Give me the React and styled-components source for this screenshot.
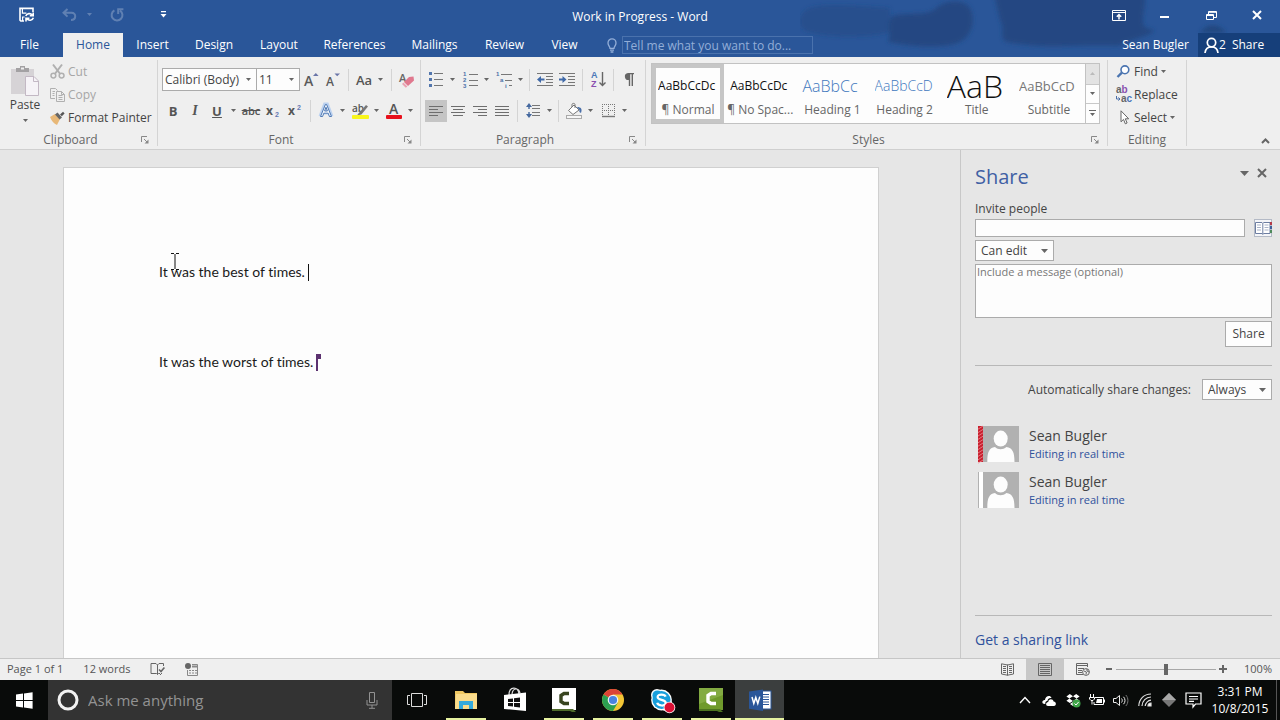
import React from "react";
import styled, { createGlobalStyle, css } from "styled-components";

const UI = `"Open Sans", "Noto Sans", sans-serif`;
const DOC = `Lato, "Open Sans", sans-serif`;
const TINY = `"Liberation Sans", sans-serif`;

const GlobalStyle = createGlobalStyle`
  *, *::before, *::after { box-sizing: border-box; }
  body { margin: 0; background: #e6e6e6; font-family: ${UI}; font-size: 12px; line-height: 16px; color: #444; }
  button, input, select, textarea { font: inherit; color: inherit; margin: 0; border-radius: 0; outline: none; }
  button { background: none; border: 0; padding: 0; cursor: default; }
  svg { display: block; flex: none; overflow: visible; }
  p, h1, h2 { margin: 0; font-weight: 400; }
`;

/* ---------- frame ---------- */
const Window = styled.div`
  display: flex;
  flex-direction: column;
  min-height: 100vh;
`;

const Header = styled.header`
  position: relative;
  background: #2a5699;
  color: #fff;
`;

const Pattern = styled.svg`
  position: absolute;
  top: 0;
  right: 0;
  overflow: hidden;
`;

const TitleBar = styled.div`
  position: relative;
  display: grid;
  grid-template-columns: 1fr auto 1fr;
  align-items: center;
  height: 33px;
`;

const QuickAccess = styled.div`
  display: flex;
  align-items: center;
  padding: 0 0 4px 19px;
  gap: 7px;
`;

const QuickButton = styled.button`
  display: flex;
  align-items: center;
  justify-content: center;
  gap: 10px;
  height: 20px;
  width: ${(p) => p.$w || 16}px;
  margin-left: ${(p) => p.$gap || 0}px;
  opacity: ${(p) => (p.disabled ? 0.25 : 1)};
  color: #fff;
`;

const DocTitle = styled.h1`
  font-size: 12px;
  line-height: 16px;
`;

const WindowButtons = styled.div`
  display: flex;
  justify-content: flex-end;
  padding-bottom: 3px;
`;

const WindowButton = styled.button`
  display: flex;
  align-items: center;
  justify-content: center;
  width: 46px;
  height: 30px;
  color: #fff;
`;

const TabBar = styled.nav`
  position: relative;
  display: flex;
  align-items: stretch;
  height: 24px;
`;

const Tab = styled.button`
  width: ${(p) => p.$w}px;
  color: ${(p) => (p.$active ? "#2a5699" : "#fff")};
  background: ${(p) => (p.$active ? "#efefef" : "transparent")};
  text-align: center;
  &:first-child { margin-right: 4px; }
`;

const TellMe = styled.label`
  display: flex;
  align-items: center;
  gap: 5px;
  margin-left: 15px;
  color: #93aed8;
`;

const TellMeInput = styled.input`
  width: 191px;
  height: 18px;
  padding: 0 1px;
  border: 1px solid #4a72ad;
  background: transparent;
  &::placeholder { color: #93aed8; opacity: 1; }
`;

const Account = styled.div`
  display: flex;
  align-items: center;
  margin-left: auto;
  gap: 9px;
`;

const ShareTab = styled.button`
  display: flex;
  align-items: center;
  gap: 6px;
  align-self: stretch;
  width: 82px;
  padding-left: 6px;
  background: #163f7a;
  color: #fff;
`;

const PersonCount = styled.span`
  display: flex;
  align-items: center;
`;

/* ---------- ribbon ---------- */
const Ribbon = styled.section`
  display: flex;
  height: 93px;
  padding-top: 3px;
  background: #efefef;
  border-bottom: 1px solid #cfcfcf;
`;

const GroupBox = styled.div`
  display: flex;
  flex-direction: column;
  flex: 0 1 ${(p) => p.$w}px;
  min-width: 0;
  margin-bottom: 3px;
  border-right: 1px solid #d4d4d4;
`;

const GroupBody = styled.div`
  flex: 1;
  display: flex;
  flex-direction: ${(p) => (p.$rows ? "column" : "row")};
  gap: ${(p) => (p.$rows ? 8 : 0)}px;
  padding: ${(p) => p.$pad || "0"};
`;

const GroupFooter = styled.div`
  display: grid;
  grid-template-columns: 1fr ${(p) => (p.$launcher ? "16px" : "0")};
  align-items: center;
  height: 12px;
  line-height: 12px;
  text-align: center;
  color: #666;
`;

const ToolRow = styled.div`
  display: flex;
  align-items: center;
  height: 23px;
`;

const Tool = styled.button`
  display: flex;
  align-items: center;
  justify-content: center;
  flex: none;
  width: 22px;
  height: 22px;
  color: #555;
  background: ${(p) => (p.$on ? "#c5c5c5" : "transparent")};
`;

const Drop = styled(Tool)`
  width: 10px;
  margin-right: ${(p) => (p.$tight ? 0 : 2)}px;
`;

const Divider = styled.span`
  flex: none;
  width: 1px;
  height: 22px;
  margin: 0 4px;
  background: #d4d4d4;
`;

const Glyph = styled.span`
  font-size: ${(p) => p.$size || 14}px;
  font-weight: ${(p) => p.$weight || 400};
  font-style: ${(p) => (p.$italic ? "italic" : "normal")};
  font-family: ${(p) => (p.$italic ? `"Liberation Serif", serif` : UI)};
  text-decoration: ${(p) => p.$line || "none"};
`;

const FieldBox = styled.span`
  display: inline-grid;
  align-items: center;
  width: ${(p) => p.$w}px;
  height: ${(p) => p.$h || 21}px;
  border: 1px solid #ababab;
  background: #fdfdfd;
  & + & { border-left: 0; }
  > * { grid-area: 1 / 1; }
  > svg { justify-self: end; margin-right: 5px; pointer-events: none; }
`;

const Select = styled.select`
  appearance: none;
  width: 100%;
  height: 100%;
  border: 0;
  padding: 0 0 0 ${(p) => p.$inset || 2}px;
  background: transparent;
`;

const PasteButton = styled.button`
  display: flex;
  flex-direction: column;
  align-items: center;
  width: 50px;
  padding-top: 5px;
`;

const PasteLabel = styled.span`
  margin: 1px 0 6px;
`;

const CommandList = styled.div`
  display: flex;
  flex-direction: column;
`;

const Command = styled.button`
  display: flex;
  align-items: center;
  gap: 3px;
  height: 23px;
  white-space: nowrap;
  color: ${(p) => (p.disabled ? "#a6a6a6" : "#444")};
  > svg:first-child { width: 15px; }
`;

const Gallery = styled.div`
  display: flex;
  width: 449px;
  height: 61px;
  border: 1px solid #c2c2c2;
  background: #fdfdfd;
  overflow: hidden;
`;

const StyleCard = styled.button`
  display: flex;
  flex-direction: column;
  align-items: center;
  justify-content: flex-end;
  flex: 1 1 72px;
  min-width: 0;
  height: 59px;
  border: 4px solid ${(p) => (p.$on ? "#c6c6c6" : "transparent")};
`;

const Sample = styled.span`
  display: flex;
  align-items: center;
  width: 60px;
  height: 30px;
  overflow: hidden;
  white-space: nowrap;
  font-family: ${UI};
  font-size: ${(p) => p.$size || 12}px;
  font-weight: ${(p) => p.$weight || 400};
  line-height: 30px;
  color: ${(p) => p.$color || "#111"};
`;

const StyleName = styled.span`
  height: 18px;
  line-height: 18px;
  white-space: nowrap;
  color: #666;
`;

const GalleryScroll = styled.div`
  display: grid;
  grid-template-rows: repeat(3, 1fr);
  width: 14px;
  border-left: 1px solid #c2c2c2;
`;

const ScrollButton = styled.button`
  display: flex;
  align-items: center;
  justify-content: center;
  background: ${(p) => (p.disabled ? "#e3e3e3" : "#fdfdfd")};
  & + & { border-top: 1px solid #c8c8c8; }
`;

const RibbonEnd = styled.div`
  flex: 1;
  display: flex;
  align-items: flex-end;
  justify-content: flex-end;
  padding: 0 10px 5px 0;
`;

/* ---------- workspace ---------- */
const Workspace = styled.main`
  flex: 1;
  display: flex;
`;

const Canvas = styled.div`
  flex: 1;
  display: flex;
  justify-content: center;
  padding: 17px 18px 0 0;
`;

const Sheet = styled.article`
  position: relative;
  flex: 0 1 816px;
  padding: 89px 95px 0;
  border: 1px solid #d0d0d0;
  border-bottom: 0;
  background: #fdfdfd;
  font-family: ${DOC};
  font-size: 14px;
  font-variant-ligatures: none;
  line-height: 30px;
  color: #1a1a1a;
`;

const Line = styled.p`
  display: flex;
  align-items: center;
  height: 30px;
  gap: 3px;
`;

const Caret = styled.span`
  width: 1px;
  height: 17px;
  background: #111;
`;

const Pointer = styled.svg`
  position: absolute;
  left: 107px;
  top: 85px;
`;

const Pane = styled.aside`
  display: flex;
  flex-direction: column;
  width: 320px;
  padding: 15px 8px 10px 14px;
  border-left: 1px solid #c8c8c8;
`;

const PaneHead = styled.div`
  display: flex;
  justify-content: space-between;
  align-items: flex-start;
`;

const PaneTitle = styled.h2`
  font-size: 20px;
  line-height: 24px;
  color: #4060a4;
`;

const PaneTools = styled.div`
  display: flex;
  align-items: center;
  gap: 8px;
  padding: 3px 5px 0 0;
`;

const PaneLabel = styled.label`
  margin-top: 12px;
  line-height: 16px;
`;

const InviteRow = styled.div`
  display: flex;
  justify-content: space-between;
  margin: 2px 0 3px;
`;

const boxed = css`
  border: 1px solid #ababab;
  background: #fdfdfd;
`;

const InviteInput = styled.input`
  ${boxed}
  flex: 0 1 270px;
  height: 18px;
`;

const Message = styled.textarea`
  ${boxed}
  display: block;
  width: 100%;
  height: 54px;
  margin: 3px 0;
  padding: 0 1px;
  resize: none;
  font-size: 11px;
  line-height: 14px;
  &::placeholder { color: #777; opacity: 1; }
`;

const ShareButton = styled.button`
  ${boxed}
  align-self: flex-end;
  width: 47px;
  height: 26px;
`;

const Rule = styled.hr`
  width: 100%;
  height: 1px;
  margin: ${(p) => p.$m};
  border: 0;
  background: #b8b8b8;
`;

const AutoShare = styled.label`
  display: flex;
  align-items: center;
  justify-content: flex-end;
  gap: 11px;
`;

const People = styled.ul`
  display: flex;
  flex-direction: column;
  gap: 10px;
  margin: 26px 0 0;
  padding: 0 0 0 3px;
  list-style: none;
`;

const Person = styled.li`
  display: flex;
  gap: 10px;
  height: 36px;
`;

const PersonName = styled.div`
  font-size: 14px;
  line-height: 20px;
`;

const Link = styled.a`
  color: #2f519c;
  text-decoration: none;
  font-size: ${(p) => (p.$large ? 14 : 11)}px;
  line-height: 16px;
  display: block;
`;

/* ---------- status bar ---------- */
const StatusBar = styled.footer`
  display: flex;
  align-items: stretch;
  justify-content: space-between;
  height: 22px;
  border-top: 1px solid #c6c6c6;
  background: #efefef;
  font-size: 11px;
  color: #555;
`;

const StatusSide = styled.div`
  display: flex;
  align-items: center;
  gap: ${(p) => p.$gap}px;
  padding: 0 8px 1px 7px;
`;

const ViewButton = styled.button`
  display: flex;
  align-items: center;
  justify-content: center;
  width: 38px;
  height: 21px;
  background: ${(p) => (p.$on ? "#c8c8c8" : "transparent")};
`;

const ZoomStep = styled.button`
  display: flex;
  align-items: center;
  justify-content: center;
  width: 14px;
  height: 16px;
`;

const ZoomRange = styled.input`
  appearance: none;
  width: 100px;
  height: 12px;
  background: linear-gradient(#a8a8a8, #a8a8a8) center / 100% 1px no-repeat;
  &::-webkit-slider-thumb { appearance: none; width: 4px; height: 11px; background: #666; }
`;

const ZoomValue = styled.output`
  width: 36px;
  margin-left: 6px;
  text-align: right;
`;

/* ---------- task bar ---------- */
const TaskBar = styled.nav`
  display: flex;
  height: 40px;
  background: #090b0a;
  color: #fff;
`;

const StartButton = styled.button`
  display: flex;
  align-items: center;
  justify-content: center;
  width: 48px;
  color: #fff;
`;

const Cortana = styled.label`
  display: flex;
  align-items: center;
  gap: 9px;
  flex: 0 1 344px;
  padding: 0 14px 0 9px;
  background: #333;
`;

const CortanaInput = styled.input`
  flex: 1;
  min-width: 0;
  border: 0;
  padding: 0;
  background: transparent;
  font-size: 15px;
  line-height: 20px;
  &::placeholder { color: #939393; opacity: 1; }
`;

const TaskButton = styled.button`
  display: flex;
  flex-direction: column;
  align-items: center;
  justify-content: space-between;
  width: 49px;
  height: 40px;
  padding-top: 6px;
  background: ${(p) => (p.$active ? "#3b3e3e" : "transparent")};
  &::after {
    content: "";
    width: ${(p) => (p.$active ? "100%" : "40px")};
    height: 2px;
    background: ${(p) => (p.$open ? "#e6f2a0" : "transparent")};
  }
`;

const Tray = styled.div`
  display: flex;
  align-items: center;
  margin-left: auto;
  padding-right: 3px;
`;

const TrayButton = styled.button`
  display: flex;
  align-items: center;
  justify-content: center;
  width: 24px;
  height: 40px;
  color: #eee;
`;

const Clock = styled.time`
  display: block;
  width: 70px;
  margin-right: 1px;
  text-align: center;
  line-height: 17px;
  white-space: nowrap;
`;

const DesktopEdge = styled.span`
  width: 1px;
  height: 40px;
  background: #555;
`;

/* ---------- drawings ---------- */
const Icon = ({ w = 16, h = 16, children, ...rest }) => (
  <svg width={w} height={h} viewBox={`0 0 ${w} ${h}`} fill="none" aria-hidden="true" {...rest}>
    {children}
  </svg>
);

const Down = ({ w = 5, color = "#666" }) => (
  <Icon w={w} h={Math.ceil(w / 2)}>
    <path d={`M0 0H${w}L${w / 2} ${Math.ceil(w / 2)}Z`} fill={color} />
  </Icon>
);

const SaveIcon = () => (
  <Icon w={16} h={16} stroke="currentColor" strokeWidth="1.6">
    <path d="M5 14H1.8L1 13.2V1.4H14V5" />
    <path d="M3.4 1.4V6.2H7.4" strokeWidth="1.2" />
    <path d="M3.6 14V10H5.6" strokeWidth="1.2" />
    <path d="M6.8 9C7.8 6.2 11.6 5.8 13.2 8M14.2 5.4V8.7H10.8M14.4 10.8C13.4 13.6 9.6 14 8 11.8M7 14.6V11.2H10.4" />
  </Icon>
);

const UndoIcon = () => (
  <Icon w={15} h={13} stroke="currentColor" strokeWidth="2">
    <path d="M5.5 1L1.5 4.8L5.5 8.6M2 4.8H9.5C12 4.8 13.4 6.4 13.2 8.6S11.4 12 9 12" />
  </Icon>
);

const RedoIcon = () => (
  <Icon w={14} h={14} stroke="currentColor" strokeWidth="2">
    <path d="M4.4 2.4A5.4 5.4 0 1 0 10 2.6M8.2 6V1.2H13.4" />
  </Icon>
);

const CustomizeIcon = () => (
  <Icon w={7} h={7}>
    <path d="M1 0H6V1.3H1ZM0.5 3H6.5L3.5 6.5Z" fill="currentColor" />
  </Icon>
);

const BulbIcon = () => (
  <Icon w={10} h={15} stroke="currentColor" strokeWidth="1.3">
    <path d="M3 10.4C3 8.4 1 7.6 1 4.9A4 4 0 0 1 9 4.9C9 7.6 7 8.4 7 10.4ZM3 12.2H7M3.6 14H6.4" />
  </Icon>
);

const PersonIcon = () => (
  <Icon w={15} h={17} stroke="currentColor" strokeWidth="1.7">
    <circle cx="7.5" cy="5.6" r="4.2" />
    <path d="M1 16C1.4 12.4 3.8 9.8 7.5 9.8S13.6 12.4 14 16" />
  </Icon>
);

const RibbonModeIcon = () => (
  <Icon w={14} h={11} stroke="currentColor" strokeWidth="1">
    <path d="M.5 .5H13.5V10.5H.5ZM.5 2.5H13.5" />
    <path d="M7 9.5V5M4.8 6.8L7 4.6L9.2 6.8" strokeWidth="1.5" />
  </Icon>
);

const RestoreIcon = () => (
  <Icon w={11} h={11} stroke="currentColor" strokeWidth="1">
    <path d="M.5 4.5H7.5V9.5H.5ZM.5 5.5H7.5M2.5 4V1.5H10.5V7.5H8M2.5 2.3H10.5" />
  </Icon>
);

const CloseIcon = ({ size = 10, color = "currentColor" }) => (
  <Icon w={size} h={size} stroke={color} strokeWidth="2">
    <path d={`M1 1L${size - 1} ${size - 1}M${size - 1} 1L1 ${size - 1}`} />
  </Icon>
);

const PasteIcon = () => (
  <Icon w={28} h={31}>
    <rect x="0" y="4" width="23" height="25" fill="#d6d3d6" />
    <path d="M5 3H9V1H14V3H18V7H5Z" fill="#a3a1a3" />
    <rect x="10" y="2.5" width="3" height="2" fill="#eee" />
    <path d="M14.5 11.5H23L27.5 16V30.5H14.5Z" fill="#f6f3f7" stroke="#c3b8c4" />
    <path d="M22.5 11.5V16.5H27.5" stroke="#c3b8c4" />
  </Icon>
);

const CutIcon = () => (
  <Icon w={15} h={15} stroke="#b0b0b0" strokeWidth="1.5">
    <path d="M3 .5L10.2 10M12 .5L4.8 10" strokeWidth="2" />
    <circle cx="3.4" cy="11.6" r="2.4" />
    <circle cx="11.6" cy="11.6" r="2.4" />
  </Icon>
);

const CopyIcon = () => (
  <Icon w={15} h={14} stroke="#b0b0b0">
    <path d="M5 10.5H.5V.5H5.5L7.5 2.5M2.5 3.5H5M2.5 5.5H4.5M2.5 7.5H4.5" />
    <path d="M6.5 3.5H11.5L14.5 6.5V13.5H6.5ZM11.5 3.5V6.5H14.5M8.5 7.5H12.5M8.5 9.5H12.5M8.5 11.5H12.5" />
  </Icon>
);

const PainterIcon = () => (
  <Icon w={15} h={14}>
    <path d="M0 6L5 3L10 8L7 14C4 12.5 1.5 10 0 6Z" fill="#e8b878" />
    <path d="M5 3.5L7.5 1.5L12 6.5L9.6 8.6Z" fill="#666" />
    <path d="M10 3.5L13 .8L14.6 2.4L11.8 5.2Z" fill="#555" />
  </Icon>
);

const LauncherIcon = () => (
  <Icon w={8} h={8} stroke="#888">
    <path d="M.5 6V.5H6M3 3L6.5 6.5" />
    <path d="M7.5 3.5V7.5H3.5Z" fill="#888" stroke="none" />
  </Icon>
);

const SizedA = ({ grow }) => (
  <Icon w={15} h={15}>
    <text x="0" y="14" fontSize={grow ? 14 : 12} fontWeight="600" fill="#5a5a5a" fontFamily={UI}>A</text>
    <path d={grow ? "M9 4L11.8 1L14.6 4Z" : "M8.5 1.4H14L11.2 4.2Z"} fill="#6a75a8" />
  </Icon>
);

const EraserIcon = () => (
  <Icon w={16} h={16}>
    <text x="0" y="10" fontSize="11" fontWeight="600" fill="#666" fontFamily={UI}>A</text>
    <path d="M10 5L14.5 4.5L15 8.5L9 14L5 10Z" fill="#e0788e" />
    <path d="M4.4 10.6L8.4 14.6L6.8 15.8L3 12Z" fill="#eaa2b2" />
  </Icon>
);

const ScriptIcon = ({ sup }) => (
  <Icon w={14} h={14}>
    <text x="0" y="11" fontSize="12" fontWeight="700" fill="#555" fontFamily={UI}>x</text>
    <text x="9" y={sup ? 6 : 13} fontSize="7" fontWeight="700" fill="#6478b4" fontFamily={TINY}>2</text>
  </Icon>
);

const EffectsIcon = () => (
  <Icon w={14} h={15}>
    <path d="M1.5 13.5L6 1.5H8L12.5 13.5M3.5 9.5H10.5" stroke="#bcd2f0" strokeWidth="4" />
    <path d="M1.5 13.5L6.4 1.5H7.6L12.5 13.5H10.4L9.2 10.2H4.8L3.6 13.5ZM5.6 8H8.4L7 4.2Z" fill="#f6f9fd" stroke="#4f79b4" />
  </Icon>
);

const HighlightIcon = () => (
  <Icon w={17} h={16}>
    <text x="0" y="9" fontSize="10" fontWeight="600" fill="#555" fontFamily={UI}>ab</text>
    <path d="M6 11L14 2L16 3.6L9.4 11.4L5 12.4Z" fill="#777" />
    <rect y="12" width="17" height="4" rx="1" fill="#f8f51c" />
  </Icon>
);

const FontColorIcon = () => (
  <Icon w={16} h={16}>
    <text x="3" y="11" fontSize="14" fontWeight="600" fill="#555" fontFamily={UI}>A</text>
    <rect y="12" width="16" height="4" rx="1" fill="#e8101c" />
  </Icon>
);

const BulletsIcon = () => (
  <Icon w={14} h={15}>
    <path d="M5 1.5H14M5 7.5H14M5 13.5H14" stroke="#777" />
    <path d="M0 0H3V3H0ZM0 6H3V9H0ZM0 12H3V15H0Z" fill="#5276ad" />
  </Icon>
);

const NumbersIcon = () => (
  <Icon w={15} h={16}>
    <path d="M6 2.5H15M6 8.5H15M6 13.5H15" stroke="#777" />
    <g fontSize="6" fontWeight="700" fill="#4a6fa8" fontFamily={TINY}>
      <text x="0" y="4">1</text><text x="0" y="10">2</text><text x="0" y="16">3</text>
    </g>
  </Icon>
);

const MultilevelIcon = () => (
  <Icon w={17} h={16}>
    <path d="M5 2.5H16M9 8.5H16M13 13.5H16" stroke="#777" />
    <g fontSize="6" fontWeight="700" fill="#4a6fa8" fontFamily={TINY}>
      <text x="0" y="4">1</text><text x="4" y="10">a</text><text x="9" y="16">i</text>
    </g>
  </Icon>
);

const IndentIcon = ({ out }) => (
  <Icon w={16} h={13}>
    <path d="M0 .5H16M9 3.5H16M9 6.5H16M9 9.5H16M0 12.5H16" stroke="#777" />
    <path d={out ? "M0 6.5L4 3V5.4H7.5V7.6H4V10Z" : "M7.5 6.5L3.5 3V5.4H0V7.6H3.5V10Z"} fill="#3f69a8" />
  </Icon>
);

const SortIcon = () => (
  <Icon w={15} h={17}>
    <g fontSize="9" fontWeight="700" fontFamily={TINY}>
      <text x="0" y="7" fill="#4a78b8">A</text><text x="0" y="16" fill="#8a4fb0">Z</text>
    </g>
    <path d="M11.5 1V14M8.5 11.5L11.5 14.5L14.5 11.5" stroke="#666" strokeWidth="1.4" />
  </Icon>
);

const PilcrowIcon = () => (
  <Icon w={10} h={13}>
    <path d="M4 0H10V1.3H9V13H7.6V1.3H6.2V13H4.8V7A3.5 3.5 0 0 1 4 0Z" fill="#666" />
  </Icon>
);

const ALIGN = {
  left: "M0 .5H14M0 3.5H9M0 6.5H14M0 9.5H9",
  center: "M0 .5H14M2 3.5H12M0 6.5H14M2 9.5H12",
  right: "M0 .5H14M5 3.5H14M0 6.5H14M5 9.5H14",
  justify: "M0 .5H14M0 3.5H14M0 6.5H14M0 9.5H14",
};
const AlignIcon = ({ kind }) => (
  <Icon w={14} h={10} stroke="#6e6e6e"><path d={ALIGN[kind]} /></Icon>
);

const SpacingIcon = () => (
  <Icon w={15} h={15}>
    <path d="M6 2.5H14M6 5.5H14M6 9.5H14M6 12.5H14" stroke="#777" />
    <path d="M3 0L6 4H3.7V6H2.3V4H0ZM3 15L0 11H2.3V9H3.7V11H6Z" fill="#44689f" />
  </Icon>
);

const ShadingIcon = () => (
  <Icon w={17} h={16}>
    <path d="M8 2L13 7L7 11.5L2.5 7.5Z" fill="#fff" stroke="#777" />
    <path d="M6 4V1.5C6 0 9 0 9 1.5V5" stroke="#777" />
    <path d="M11 4C15 4 16.5 6 15 10L13.4 9V7Z" fill="#496ea8" />
    <rect x=".5" y="12.5" width="15" height="3" fill="#f6f6f6" stroke="#aaa" />
  </Icon>
);

const BordersIcon = () => (
  <Icon w={13} h={13} stroke="#777">
    <path d="M.5 0V12M6.5 0V12M12.5 0V12M0 .5H13M0 6.5H13" strokeDasharray="1 1" />
    <path d="M0 12.5H13" strokeWidth="1.4" />
  </Icon>
);

const FindIcon = () => (
  <Icon w={14} h={13}>
    <circle cx="8.4" cy="4.8" r="3.9" fill="#fff" stroke="#4a74b0" strokeWidth="1.6" />
    <path d="M5.4 7.6L1 12" stroke="#4a74b0" strokeWidth="2.4" />
  </Icon>
);

const ReplaceIcon = () => (
  <Icon w={15} h={17}>
    <g fontSize="10" fontWeight="700" fontFamily={TINY}>
      <text x="0" y="7" fill="#666">a<tspan fill="#8a4fb0">b</tspan></text>
      <text x="5" y="16" fill="#666">a<tspan fill="#4a74b8">c</tspan></text>
    </g>
    <path d="M.5 10V13H3.5M2.4 11.4L4 13L2.4 14.6" stroke="#4a6fa8" />
  </Icon>
);

const SelectIcon = () => (
  <Icon w={12} h={15}>
    <path d="M3.5 .8V11.8L6 9.4L7.8 13.8L9.6 13L7.8 8.8H11.2Z" fill="#fff" stroke="#666" />
  </Icon>
);

const BookIcon = () => (
  <Icon w={18} h={18}>
    <rect x=".5" y=".5" width="17" height="17" fill="#f4f5f8" stroke="#b4bac6" />
    <path d="M1.5 3.5H8L8.8 4.5L9.6 3.5H16V14.5H9.6L8.8 15.5L8 14.5H1.5ZM8.8 4.5V15" fill="#fff" stroke="#6d7ea2" />
    <path d="M3 6H7M3 8.5H7M3 11H7M10.5 6H14.5M10.5 8.5H14.5M10.5 11H14.5" stroke="#a9b3c8" />
    <path d="M16 3H18V6H16Z" fill="#b43a48" />
    <path d="M16 7H18V10H16Z" fill="#3f5f99" />
    <path d="M16 11H18V14H16Z" fill="#4f8a5b" />
  </Icon>
);

const Avatar = ({ striped }) => (
  <Icon w={41} h={36}>
    <rect width="41" height="36" fill="#b1b1b1" />
    {striped ? (
      <>
        <rect width="5" height="36" fill="#c8202f" />
        <path
          d={Array.from({ length: 11 }, (_, i) => `M0 ${i * 3.4 + 3.2}L5 ${i * 3.4}`).join("")}
          stroke="#ee8a90"
          strokeWidth=".8"
        />
      </>
    ) : (
      <rect x="1" width="4" height="36" fill="#fff" />
    )}
    <ellipse cx="22.7" cy="12.6" rx="7" ry="8" fill="#fdfdfd" />
    <path d="M9.3 36C9.3 26 11 22 17 21C20 24 25 24 28.4 21C34.5 22 36.5 26 36.5 36Z" fill="#fdfdfd" />
  </Icon>
);

const RemoteCursor = () => (
  <Icon w={5} h={17}><path d="M0 0H5V5H2V17H0Z" fill="#5c3270" /></Icon>
);

const ProofIcon = () => (
  <Icon w={15} h={14} stroke="#666">
    <path d="M7.5 12.5L6.5 11.5H1V1.5H6L7.5 3V12.5L8.5 11.5H10M7.5 3L9 1.5H13.5V4" />
    <path d="M9 7.5L11 9.5L14.4 5.5" strokeWidth="1.6" /><path d="M10 13L12 11" />
  </Icon>
);

const MacroIcon = () => (
  <Icon w={14} h={13}>
    <circle cx="3" cy="3" r="3" fill="#666" />
    <path d="M7 1.5H12.5V12.5H2.5V7" stroke="#888" />
    <path d="M7 3.5H12.5" stroke="#888" strokeWidth="2" />
    <path d="M4 7.5H6M7 7.5H9M10 7.5H12M4 10H6M7 10H9M10 10H12" stroke="#888" />
  </Icon>
);

const ReadIcon = () => (
  <Icon w={13} h={13} stroke="#666">
    <path d="M6.5 12.5V1.5M.5 .8L6.5 2L12.5 .8V11L6.5 12.2L.5 11ZM2 3.5H5M2 5.5H5M2 7.5H5M2 9.5H5M8 3.5H11M8 5.5H11M8 7.5H11M8 9.5H11" />
  </Icon>
);

const PrintIcon = () => (
  <Icon w={14} h={13} stroke="#666">
    <path d="M.5 .5H13.5V12.5H.5ZM2 2.5H12M2 4.5H12M2 6.5H12M2 8.5H12M2 10.5H12" />
  </Icon>
);

const WebIcon = () => (
  <Icon w={14} h={13} stroke="#666">
    <path d="M7 11.5H.5V.5H11.5V4M.5 2.5H11.5M2 5.5H8M2 7.5H6M2 9.5H6" />
    <circle cx="10" cy="9" r="3.4" /><path d="M8 8L10.4 9L10 11.5M11 6V8L13 9" />
  </Icon>
);

const WindowsIcon = () => (
  <Icon w={17} h={17}>
    <path d="M0 2.6L7 1.6V8H0ZM8 1.4L16.6 .2V8H8ZM0 9H7V15.4L0 14.4ZM8 9H16.6V16.8L8 15.6Z" fill="#fff" />
  </Icon>
);

const MicIcon = () => (
  <Icon w={12} h={17} stroke="#929292">
    <path d="M3.5 .5H8.5V10.5H3.5ZM1 8V13H11V8M6 13V16M3 16.3H9" />
  </Icon>
);

const TaskViewIcon = () => (
  <Icon w={20} h={28} stroke="#ddd">
    <path d="M4.5 7.5H15.5V20.5H4.5ZM3 9.5H.5V18.5H3M17 9.5H19.5V18.5H17" />
  </Icon>
);

const FolderIcon = () => (
  <Icon w={22} h={28}>
    <path d="M0 5H8L10 7H22V23H0Z" fill="#f0c862" />
    <path d="M1 8H22V23H0Z" fill="#fadc8c" />
    <path d="M4 23V15H18V23H14V19H8V23Z" fill="#35aadc" />
  </Icon>
);

const StoreIcon = () => (
  <Icon w={22} h={28}>
    <path d="M5 9C5 0 14 0 15 8M8 8C9 1 15 2 16 7" stroke="#ddd" strokeWidth="1.2" />
    <path d="M0 9L22 6.5V25L0 23Z" fill="#fff" />
    <path d="M4 13L9 12.4V16H4ZM10 12.2L16 11.5V16H10ZM4 17H9V20.6L4 20ZM10 17H16V21.6L10 20.8Z" fill="#111" />
  </Icon>
);

const CamtasiaIcon = ({ green }) => (
  <Icon w={24} h={28}>
    <rect y="2" width="24" height="22" fill={green ? "#6f9a2c" : "#fff"} />
    {green && <path d="M0 2H24V9L0 18Z" fill="#83ab42" />}
    <path d="M0 23H21L24 26H20L18 25H0Z" fill={green ? "#4d7420" : "#4f6b2b"} />
    <path d="M17 7.5H12L9 9.5V15.5L12 17.5H17" stroke={green ? "#fff" : "#38441f"} strokeWidth="3.4" />
  </Icon>
);

const ChromeIcon = () => (
  <Icon w={22} h={28}>
    <circle cx="11" cy="14" r="11" fill="#f3c635" />
    <path d="M11 14L1.5 8.5A11 11 0 0 1 20.5 8.5H11Z" fill="#dc4437" />
    <path d="M1.5 8.5A11 11 0 0 0 11 25L15.8 16.8L11 14Z" fill="#2c9f51" />
    <circle cx="11" cy="14" r="5.3" fill="#f4f4f4" /><circle cx="11" cy="14" r="4.1" fill="#4a83e0" />
  </Icon>
);

const SkypeIcon = () => (
  <Icon w={24} h={28}>
    <circle cx="7" cy="9" r="6" fill="#fff" /><circle cx="16" cy="18.5" r="6.5" fill="#fff" />
    <circle cx="11.5" cy="14" r="10.4" fill="#fff" />
    <circle cx="7.4" cy="9.4" r="5" fill="#189fdc" /><circle cx="11.5" cy="14" r="9" fill="#189fdc" />
    <path d="M15.6 10.6C14.8 8 7.6 7.6 7.6 11S16 13.4 15.8 17S8 20.2 7.2 16.8" stroke="#fff" strokeWidth="2.2" />
    <circle cx="19.5" cy="21.5" r="5.8" fill="#fff" /><circle cx="19.5" cy="21.5" r="5" fill="#dc1034" />
  </Icon>
);

const WordIcon = () => (
  <Icon w={22} h={28}>
    <rect x="12" y="5" width="10" height="18" fill="#fff" stroke="#2a5699" />
    <path d="M14 8.5H20M14 11H20M14 13.5H20M14 16H20M14 18.5H20" stroke="#2a5699" />
    <path d="M0 5.6L14 3.4V25L0 22.8Z" fill="#2a5699" />
    <path d="M3 11L4.8 17.4L6.8 11.4L8.8 17.4L10.8 10.6" stroke="#fff" strokeWidth="1.5" />
  </Icon>
);

const CloudIcon = () => (
  <Icon w={14} h={11}>
    <path d="M3 9C-1 9 0 4.6 3 5C3.4 .6 8.4 -.4 9.6 3C6.6 2.6 5.6 4.6 5.4 6C3.6 6.2 3 7.6 3.4 9Z" fill="#fff" />
    <path d="M6 11C3.4 11 3.6 7 6.2 7C6.4 3.6 11 3.4 11.6 6.6C14.6 6.6 14.6 11 12 11Z" fill="#fff" />
  </Icon>
);

const DropboxIcon = () => (
  <Icon w={15} h={15}>
    <path d="M3.8 1L7 3.2L3.4 5.6L.4 3.4ZM10.2 1L7 3.2L10.6 5.6L13.6 3.4ZM3.4 5.6L7 8L3.8 10L.4 7.8ZM10.6 5.6L7 8L10.2 10L13.6 7.8ZM4 11L7 9L10 11L7 13Z" fill="#fff" />
    <circle cx="10.5" cy="10.5" r="4" fill="#3fa548" /><path d="M8.5 10.5L10 12L12.6 9" stroke="#fff" />
  </Icon>
);

const BatteryIcon = () => (
  <Icon w={16} h={12} stroke="#fff">
    <path d="M6 3.5H14.5V10.5H5V8M15.5 5.5V8.5" /><path d="M8 5H13V9H7Z" fill="#fff" stroke="none" />
    <path d="M1.5 0V3M4.5 0V3M.5 3.5H5.5V5L4 6.5H2L.5 5ZM3 6.5V10.5" />
  </Icon>
);

const VolumeIcon = () => (
  <Icon w={16} h={13} stroke="#eee">
    <path d="M.5 4.5H3L6.5 1.5V11.5L3 8.5H.5ZM8.5 4.5C9.5 5.5 9.5 7.5 8.5 8.5M10.5 2.8C12.5 4.8 12.5 8.2 10.5 10.2" />
    <path d="M12.8 1C15.6 4 15.6 9 12.8 12" stroke="#777" />
  </Icon>
);

const WifiIcon = () => (
  <Icon w={14} h={14} stroke="#ddd" strokeWidth="1.2">
    <path d="M.8 13C1 6 6 1 13 1M4 13C4.2 8 8 4.2 13 4M7.2 13C7.4 10 10 7.4 13 7.2" />
    <path d="M13 10V13H10A3 3 0 0 1 13 10Z" fill="#fff" />
  </Icon>
);

const DiamondIcon = () => (
  <Icon w={14} h={14}>
    <path d="M7 0L14 7L7 14L0 7Z" fill="#777" /><path d="M7 0L14 7H0Z" fill="#a8a8a8" />
  </Icon>
);

const ActionIcon = () => (
  <Icon w={17} h={16} stroke="#fff" strokeWidth="1.2">
    <path d="M1 1H16V12H10.5L8 15V12H1ZM4 4.5H13M4 7H13M4 9.3H9" />
  </Icon>
);

/* ---------- composed parts ---------- */
const Group = ({ label, w, launcher, children }) => (
  <GroupBox $w={w}>
    {children}
    <GroupFooter $launcher={launcher}>
      <span>{label}</span>
      {launcher && <button aria-label={`${label} settings`}><LauncherIcon /></button>}
    </GroupFooter>
  </GroupBox>
);

const Dropdown = ({ w, h, inset, label, value, arrow = 5 }) => (
  <FieldBox $w={w} $h={h}>
    <Select $inset={inset} aria-label={label} defaultValue={value}>
      <option>{value}</option>
    </Select>
    <Down w={arrow} />
  </FieldBox>
);

const DropArrow = ({ label, tight }) => (
  <Drop aria-label={label} $tight={tight}><Down /></Drop>
);

const TABS = [
  ["File", 59], ["Home", 60], ["Insert", 59], ["Design", 64], ["Layout", 66],
  ["References", 85], ["Mailings", 75], ["Review", 65], ["View", 55],
];

const STYLES = [
  { name: "¶ Normal", sample: "AaBbCcDc", on: true },
  { name: "¶ No Spac...", sample: "AaBbCcDc" },
  { name: "Heading 1", sample: "AaBbCc", size: 16, color: "#3f78bd", weight: 300 },
  { name: "Heading 2", sample: "AaBbCcD", size: 14, color: "#3f78bd", weight: 300 },
  { name: "Title", sample: "AaB", size: 32, weight: 300 },
  { name: "Subtitle", sample: "AaBbCcD", size: 13, color: "#777" },
];

const APPS = [
  ["File Explorer", <FolderIcon />, true],
  ["Store", <StoreIcon />, false],
  ["Camtasia Studio", <CamtasiaIcon />, true],
  ["Chrome", <ChromeIcon />, true],
  ["Skype", <SkypeIcon />, true],
  ["Camtasia Recorder", <CamtasiaIcon green />, true],
];

const TRAY = [
  ["Show hidden icons", <Icon w={12} h={8} stroke="#fff" strokeWidth="1.4"><path d="M1 7L6 1.6L11 7" /></Icon>],
  ["OneDrive", <CloudIcon />], ["Dropbox", <DropboxIcon />], ["Battery", <BatteryIcon />],
  ["Volume", <VolumeIcon />], ["Network", <WifiIcon />], ["Status", <DiamondIcon />],
  ["Action center", <ActionIcon />],
];

const PEOPLE = [{ name: "Sean Bugler", striped: true }, { name: "Sean Bugler", striped: false }];

const AppHeader = () => (
  <Header>
    <Pattern width="480" height="57" viewBox="0 0 480 57" aria-hidden="true">
      <defs>
        <filter id="soft" x="-10%" y="-10%" width="120%" height="120%">
          <feGaussianBlur stdDeviation="2" />
        </filter>
      </defs>
      <g fill="#21477f" filter="url(#soft)">
        <path d="M2 14C8 2 40 4 90 8V32C60 40 24 36 8 32C-2 28 -2 20 2 14Z" opacity=".45" />
        <path d="M92 16C108 12 124 16 134 10C142 0 164 -2 170 8C176 20 172 36 160 42C140 50 110 46 88 42C92 34 86 26 92 16Z" opacity=".9" />
        <path d="M194 -6H344C348 8 338 20 346 28L354 30C352 36 334 38 318 46C284 44 250 50 206 42C198 36 206 30 200 20Z" opacity=".9" />
        <path d="M400 33C406 23 420 23 426 33Z" />
      </g>
    </Pattern>
    <TitleBar>
      <QuickAccess>
        <QuickButton aria-label="Save"><SaveIcon /></QuickButton>
        <QuickButton disabled aria-label="Undo" $w={30} $gap={20}><UndoIcon /><Down color="#fff" /></QuickButton>
        <QuickButton disabled aria-label="Repeat" $gap={10}><RedoIcon /></QuickButton>
        <QuickButton aria-label="Customize toolbar" $gap={23}><CustomizeIcon /></QuickButton>
      </QuickAccess>
      <DocTitle>Work in Progress - Word</DocTitle>
      <WindowButtons>
        <WindowButton aria-label="Ribbon display options"><RibbonModeIcon /></WindowButton>
        <WindowButton aria-label="Minimize">
          <Icon w={10} h={8}><path d="M0 5H9V7H0Z" fill="#fff" /></Icon>
        </WindowButton>
        <WindowButton aria-label="Restore"><RestoreIcon /></WindowButton>
        <WindowButton aria-label="Close"><CloseIcon /></WindowButton>
      </WindowButtons>
    </TitleBar>
    <TabBar>
      {TABS.map(([name, w]) => (
        <Tab key={name} $w={w} $active={name === "Home"}>{name}</Tab>
      ))}
      <TellMe>
        <BulbIcon />
        <TellMeInput aria-label="Tell me what you want to do" placeholder="Tell me what you want to do..." />
      </TellMe>
      <Account>
        <span>Sean Bugler</span>
        <ShareTab>
          <PersonCount><PersonIcon />2</PersonCount>
          Share
        </ShareTab>
      </Account>
    </TabBar>
  </Header>
);

const HomeRibbon = () => (
  <Ribbon>
    <Group label="Clipboard" w={158} launcher>
      <GroupBody>
        <PasteButton>
          <PasteIcon />
          <PasteLabel>Paste</PasteLabel>
          <Down />
        </PasteButton>
        <CommandList>
          <Command disabled><CutIcon />Cut</Command>
          <Command disabled><CopyIcon />Copy</Command>
          <Command><PainterIcon />Format Painter</Command>
        </CommandList>
      </GroupBody>
    </Group>

    <Group label="Font" w={263} launcher>
      <GroupBody $rows $pad="8px 0 0 4px">
        <ToolRow>
          <Dropdown w={95} h={23} label="Font" value="Calibri (Body)" />
          <Dropdown w={43} h={23} label="Font size" value="11" />
          <Tool aria-label="Grow font"><SizedA grow /></Tool>
          <Tool aria-label="Shrink font"><SizedA /></Tool>
          <Divider />
          <Tool aria-label="Change case"><Glyph $size={13} $weight={600}>Aa</Glyph></Tool>
          <DropArrow label="Change case options" />
          <Divider />
          <Tool aria-label="Clear formatting"><EraserIcon /></Tool>
        </ToolRow>
        <ToolRow>
          <Tool aria-label="Bold"><Glyph $weight={700} $size={13}>B</Glyph></Tool>
          <Tool aria-label="Italic"><Glyph $italic $weight={700} $size={14}>I</Glyph></Tool>
          <Tool aria-label="Underline"><Glyph $weight={700} $size={13} $line="underline">U</Glyph></Tool>
          <DropArrow label="Underline options" />
          <Tool aria-label="Strikethrough"><Glyph $size={11} $weight={600} $line="line-through">abc</Glyph></Tool>
          <Tool aria-label="Subscript"><ScriptIcon /></Tool>
          <Tool aria-label="Superscript"><ScriptIcon sup /></Tool>
          <Divider />
          <Tool aria-label="Text effects"><EffectsIcon /></Tool>
          <DropArrow label="Text effects options" />
          <Tool aria-label="Highlight"><HighlightIcon /></Tool>
          <DropArrow label="Highlight options" />
          <Tool aria-label="Font color"><FontColorIcon /></Tool>
          <DropArrow label="Font color options" />
        </ToolRow>
      </GroupBody>
    </Group>

    <Group label="Paragraph" w={225} launcher>
      <GroupBody $rows $pad="8px 0 0 4px">
        <ToolRow>
          <Tool aria-label="Bullets"><BulletsIcon /></Tool>
          <DropArrow label="Bullet options" />
          <Tool aria-label="Numbering"><NumbersIcon /></Tool>
          <DropArrow label="Numbering options" />
          <Tool aria-label="Multilevel list"><MultilevelIcon /></Tool>
          <DropArrow label="Multilevel options" tight />
          <Divider />
          <Tool aria-label="Decrease indent"><IndentIcon out /></Tool>
          <Tool aria-label="Increase indent"><IndentIcon /></Tool>
          <Divider />
          <Tool aria-label="Sort"><SortIcon /></Tool>
          <Divider />
          <Tool aria-label="Show marks"><PilcrowIcon /></Tool>
        </ToolRow>
        <ToolRow>
          <Tool aria-label="Align left" $on><AlignIcon kind="left" /></Tool>
          <Tool aria-label="Center"><AlignIcon kind="center" /></Tool>
          <Tool aria-label="Align right"><AlignIcon kind="right" /></Tool>
          <Tool aria-label="Justify"><AlignIcon kind="justify" /></Tool>
          <Divider />
          <Tool aria-label="Line spacing"><SpacingIcon /></Tool>
          <DropArrow label="Line spacing options" tight />
          <Divider />
          <Tool aria-label="Shading"><ShadingIcon /></Tool>
          <DropArrow label="Shading options" />
          <Tool aria-label="Borders"><BordersIcon /></Tool>
          <DropArrow label="Border options" />
        </ToolRow>
      </GroupBody>
    </Group>

    <Group label="Styles" w={462} launcher>
      <GroupBody $pad="3px 0 0 5px">
        <Gallery>
          {STYLES.map((s) => (
            <StyleCard key={s.name} $on={s.on}>
              <Sample $size={s.size} $color={s.color} $weight={s.weight}>{s.sample}</Sample>
              <StyleName>{s.name}</StyleName>
            </StyleCard>
          ))}
          <GalleryScroll>
            <ScrollButton disabled aria-label="Previous styles">
              <Icon w={5} h={3}><path d="M0 3H5L2.5 0Z" fill="#bbb" /></Icon>
            </ScrollButton>
            <ScrollButton aria-label="Next styles"><Down /></ScrollButton>
            <ScrollButton aria-label="More styles">
              <Icon w={7} h={7}><path d="M0 0H7V1H0ZM1 3H6L3.5 6Z" fill="#666" /></Icon>
            </ScrollButton>
          </GalleryScroll>
        </Gallery>
      </GroupBody>
    </Group>

    <Group label="Editing" w={79}>
      <GroupBody $pad="0 0 0 8px">
        <CommandList>
          <Command><FindIcon />Find<Down /></Command>
          <Command><ReplaceIcon />Replace</Command>
          <Command><SelectIcon />Select<Down /></Command>
        </CommandList>
      </GroupBody>
    </Group>

    <RibbonEnd>
      <button aria-label="Collapse ribbon">
        <Icon w={9} h={6} stroke="#666" strokeWidth="2"><path d="M1 5L4.5 1.5L8 5" /></Icon>
      </button>
    </RibbonEnd>
  </Ribbon>
);

const SharePane = () => (
  <Pane>
    <PaneHead>
      <PaneTitle>Share</PaneTitle>
      <PaneTools>
        <button aria-label="Pane options"><Down w={9} /></button>
        <button aria-label="Close pane"><CloseIcon size={10} color="#666" /></button>
      </PaneTools>
    </PaneHead>
    <PaneLabel htmlFor="invite">Invite people</PaneLabel>
    <InviteRow>
      <InviteInput id="invite" />
      <button aria-label="Address book"><BookIcon /></button>
    </InviteRow>
    <Dropdown w={79} h={21} inset={5} arrow={7} label="Permission" value="Can edit" />
    <Message aria-label="Message" placeholder="Include a message (optional)" />
    <ShareButton>Share</ShareButton>
    <Rule $m="18px 0 13px" />
    <AutoShare>
      Automatically share changes:
      <Dropdown w={70} h={21} inset={5} arrow={7} value="Always" />
    </AutoShare>
    <People>
      {PEOPLE.map((p, i) => (
        <Person key={i}>
          <Avatar striped={p.striped} />
          <div>
            <PersonName>{p.name}</PersonName>
            <Link href="#presence">Editing in real time</Link>
          </div>
        </Person>
      ))}
    </People>
    <Rule $m="auto 0 16px" />
    <Link href="#link" $large>Get a sharing link</Link>
  </Pane>
);

export default function App() {
  return (
    <Window>
      <GlobalStyle />
      <AppHeader />
      <HomeRibbon />
      <Workspace>
        <Canvas>
          <Sheet>
            <Line>It was the best of times.<Caret /></Line>
            <Line />
            <Line />
            <Line>It was the worst of times.<RemoteCursor /></Line>
            <Pointer width="8" height="17" viewBox="0 0 8 17" fill="none" stroke="#111" aria-hidden="true">
              <path d="M0 .5H3M5 .5H8M4 1V16M0 16.5H3M5 16.5H8" />
            </Pointer>
          </Sheet>
        </Canvas>
        <SharePane />
      </Workspace>
      <StatusBar>
        <StatusSide $gap={20}>
          <span>Page 1 of 1</span>
          <span>12 words</span>
          <ProofIcon />
          <MacroIcon />
        </StatusSide>
        <StatusSide $gap={0}>
          <ViewButton aria-label="Read mode"><ReadIcon /></ViewButton>
          <ViewButton aria-label="Print layout" $on><PrintIcon /></ViewButton>
          <ViewButton aria-label="Web layout"><WebIcon /></ViewButton>
          <ZoomStep aria-label="Zoom out"><Icon w={6} h={2}><path d="M0 0H6V2H0Z" fill="#666" /></Icon></ZoomStep>
          <ZoomRange type="range" aria-label="Zoom" min="0" max="200" defaultValue="100" />
          <ZoomStep aria-label="Zoom in"><Icon w={8} h={8}><path d="M3 0H5V3H8V5H5V8H3V5H0V3H3Z" fill="#666" /></Icon></ZoomStep>
          <ZoomValue>100%</ZoomValue>
        </StatusSide>
      </StatusBar>
      <TaskBar>
        <StartButton aria-label="Start"><WindowsIcon /></StartButton>
        <Cortana>
          <Icon w={22} h={22} stroke="#f2f2f2" strokeWidth="3"><circle cx="11" cy="11" r="9" /></Icon>
          <CortanaInput aria-label="Search" placeholder="Ask me anything" />
          <MicIcon />
        </Cortana>
        <TaskButton aria-label="Task view"><TaskViewIcon /></TaskButton>
        {APPS.map(([name, icon, open]) => (
          <TaskButton key={name} aria-label={name} $open={open}>{icon}</TaskButton>
        ))}
        <TaskButton aria-label="Word" $open $active><WordIcon /></TaskButton>
        <Tray>
          {TRAY.map(([name, icon]) => <TrayButton key={name} aria-label={name}>{icon}</TrayButton>)}
          <Clock>3:31 PM<br />10/8/2015</Clock>
          <DesktopEdge />
        </Tray>
      </TaskBar>
    </Window>
  );
}
